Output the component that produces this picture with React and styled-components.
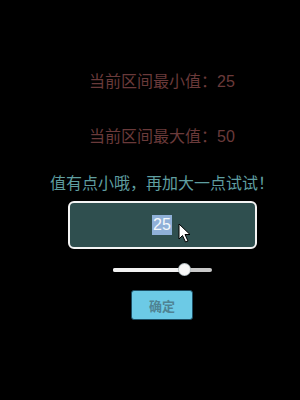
import React from 'react';
import styled, { createGlobalStyle } from 'styled-components';

const Global = createGlobalStyle`
  html, body {
    margin: 0;
    padding: 0;
    background: #000;
  }
  body {
    font-family: "Liberation Sans", "Noto Sans CJK SC", sans-serif;
  }
`;

const Page = styled.div`
  width: 300px;
  height: 400px;
  box-sizing: border-box;
  padding: 72px 0 0 24px;
  display: flex;
  flex-direction: column;
  align-items: center;
`;

const Range = styled.div`
  font-size: 16px;
  line-height: 20px;
  height: 20px;
  color: #6a3a3a;
  margin-bottom: ${p => p.$gap || 0}px;
`;

const Hint = styled.div`
  font-size: 16px;
  line-height: 20px;
  height: 20px;
  color: #5f9ea0;
  white-space: nowrap;
`;

const Field = styled.div`
  position: relative;
  margin-top: 7px;
  width: 189px;
  height: 48px;
  box-sizing: border-box;
  border: 2px solid #f4f4f4;
  border-radius: 6px;
  background: #2f4f4f;
  display: flex;
  align-items: center;
  justify-content: center;
  font-size: 16px;
  color: #e8eef0;
`;

const Selected = styled.span`
  background: #8fb0d8;
  color: #f4f8fb;
  line-height: 20px;
  padding: 0 1px;
`;

const Pointer = styled.svg`
  position: absolute;
  left: 108px;
  top: 20px;
`;

const Slider = styled.div`
  position: relative;
  margin-top: 15px;
  width: 99px;
  height: 12px;
  display: flex;
  align-items: center;
`;

const Track = styled.div`
  width: 100%;
  height: 4px;
  border-radius: 2px;
  background: #c9c9c9;
  overflow: hidden;
`;

const Fill = styled.div`
  height: 100%;
  background: #f2f2f2;
`;

const Thumb = styled.div`
  position: absolute;
  top: 0;
  width: 11px;
  height: 11px;
  margin-left: -5px;
  border-radius: 50%;
  background: #f8f8f8;
  box-shadow: 0 0 0 1px #b9c3c6;
`;

const Confirm = styled.button`
  margin-top: 14px;
  width: 62px;
  height: 30px;
  border: 1px solid #1c4d63;
  border-radius: 3px;
  background: #6ccae6;
  color: #4f8393;
  font-family: "Noto Sans CJK SC", sans-serif;
  font-size: 13px;
  font-weight: 700;
  padding: 0;
`;

export default function App() {
  const pct = 72;
  return (
    <>
      <Global />
      <Page>
        <Range $gap={35}>当前区间最小值：25</Range>
        <Range $gap={27}>当前区间最大值：50</Range>
        <Hint>值有点小哦，再加大一点试试！</Hint>
        <Field>
          <Selected>25</Selected>
          <Pointer width="14" height="20" viewBox="0 0 14 20">
            <path d="M1 1 L1 16 L4.5 12.5 L7.5 19 L10 18 L7 11.5 L12 11.5 Z" fill="#fff" stroke="#000" strokeWidth="1" strokeLinejoin="round" />
          </Pointer>
        </Field>
        <Slider>
          <Track>
            <Fill style={{ width: `${pct}%` }} />
          </Track>
          <Thumb style={{ left: `${pct}%` }} />
        </Slider>
        <Confirm>确定</Confirm>
      </Page>
    </>
  );
}
